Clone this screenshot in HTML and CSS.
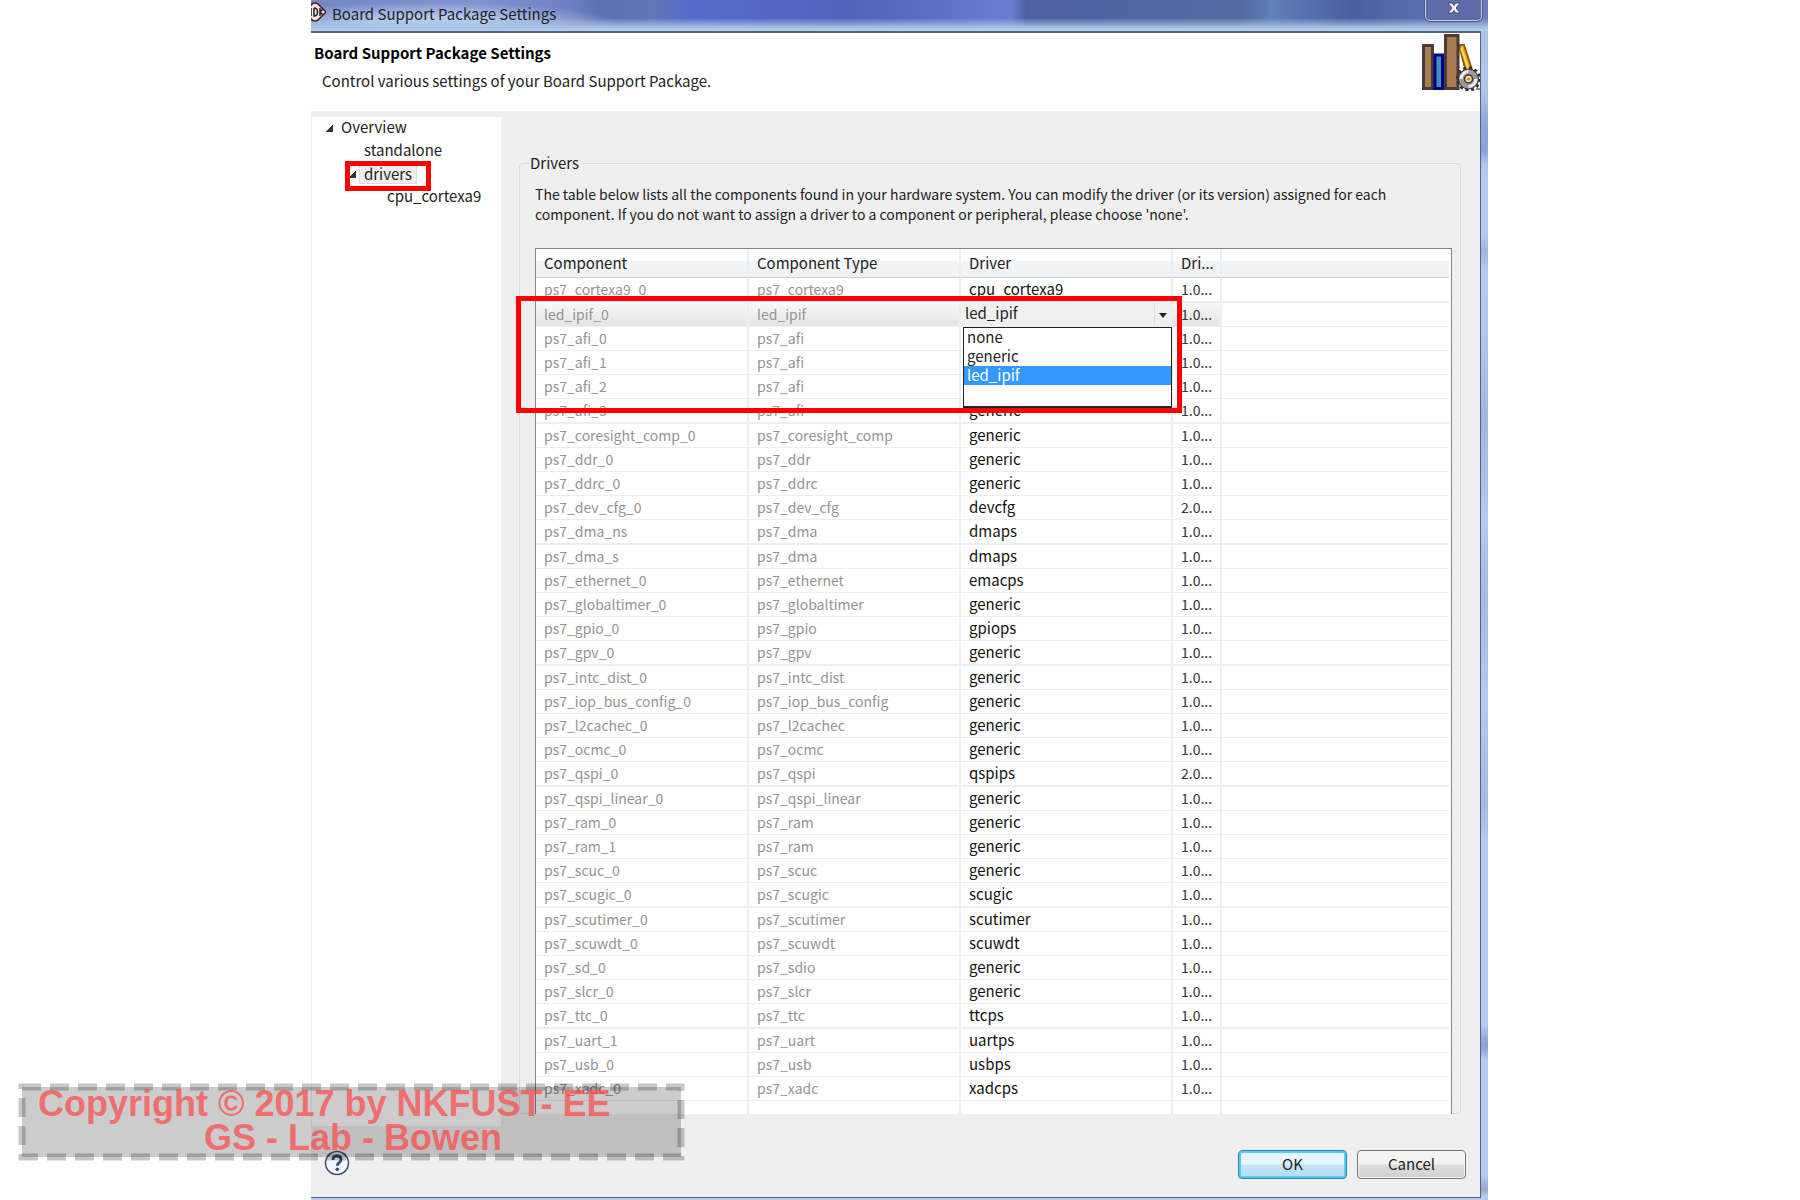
FILE: index.html
```html
<!DOCTYPE html>
<html lang="en">
<head>
<meta charset="utf-8">
<title>Board Support Package Settings</title>
<link rel="stylesheet" href="styles.css">
</head>
<body>
<main class="dialog">
  <header class="titlebar">
    <svg class="app-icon" viewBox="0 0 15 24" width="15" height="24" aria-hidden="true">
      <path d="M-5 11 1 4q3-2 6 0l7 7q1 1 0 2l-7 7q-3 2-6 0l-6-7Z" fill="#f3e4e2" stroke="#4a2228" stroke-width="1.600"/>
      <path d="M0 8v8M3 8v8q3.500 0 3.500-4T3 8M9 8v8M12 9l-3 3 3 3" fill="none" stroke="#222" stroke-width="1.500"/>
    </svg>
    <span class="title">Board Support Package Settings</span>
    <button class="close" type="button" aria-label="Close">
      <svg viewBox="0 0 14 12" width="14" height="12"><path d="M1 1h4l2 2.500 2-2.500h4l-4 5 4 5h-4l-2-2.500-2 2.500H1l4-5z" fill="#fff" stroke="#444d70"/></svg>
    </button>
  </header>
  <div class="frame">
    <section class="banner">
      <div>
        <h1>Board Support Package Settings</h1>
        <p>Control various settings of your Board Support Package.</p>
      </div>
      <svg class="books" viewBox="0 0 60 58" width="60" height="58" aria-hidden="true">
        <path d="M39 12h5l11 34-6 4z" fill="#f2b51c" stroke="#8b5a14" stroke-width="2"/>
        <path d="M41 15l9 26" stroke="#ffe04a" stroke-width="2"/>
        <rect x="3.500" y="12.500" width="9" height="43" fill="#a87b50" stroke="#4c3a34" stroke-width="3"/>
        <rect x="15" y="22" width="7.500" height="33.500" fill="#3f93b8" stroke="#00008c" stroke-width="3"/>
        <rect x="25.500" y="2.500" width="12.500" height="53" fill="#a87b50" stroke="#4c3a34" stroke-width="3"/>
        <path d="M56 56h4" stroke="#b08070" stroke-width="2"/>
        <circle cx="48.500" cy="46" r="11" fill="none" stroke="#333" stroke-width="3" stroke-dasharray="3 2.760"/>
        <circle cx="48.500" cy="46" r="10" fill="#999" stroke="#333"/>
        <path d="M41 46a7.500 7.500 0 0 1 7.500-7.500M56 46a7.500 7.500 0 0 1-7.500 7.500" fill="none" stroke="#eee" stroke-width="3"/>
        <circle cx="48.500" cy="46" r="4" fill="#f3dca0" stroke="#333" stroke-width="1.500"/>
        <circle cx="48.500" cy="46" r="1.500" fill="#c98b20"/>
      </svg>
    </section>
    <div class="body">
      <nav class="tree">
        <ul>
          <li><span class="node"><i class="twisty"></i><a href="#overview">Overview</a></span>
            <ul>
              <li><span class="node"><a href="#standalone">standalone</a></span></li>
              <li><span class="node marked"><i class="twisty"></i><a class="current" href="#drivers">drivers</a></span>
                <ul>
                  <li><span class="node"><a href="#cpu">cpu_cortexa9</a></span></li>
                </ul>
              </li>
            </ul>
          </li>
        </ul>
      </nav>
      <fieldset class="drivers">
        <legend>Drivers</legend>
        <p>The table below lists all the components found in your hardware system. You can modify the driver (or its version) assigned for each component. If you do not want to assign a driver to a component or peripheral, please choose 'none'.</p>
        <div class="grid">
          <table>
            <colgroup><col class="c-name"><col class="c-type"><col class="c-driver"><col class="c-version"><col></colgroup>
            <thead><tr><th>Component</th><th>Component Type</th><th>Driver</th><th>Dri...</th><th></th></tr></thead>
            <tbody>
              <tr><td>ps7_cortexa9_0</td><td>ps7_cortexa9</td><td>cpu_cortexa9</td><td>1.0...</td><td></td></tr>
              <tr class="selected"><td>led_ipif_0</td><td>led_ipif</td><td class="editor">
                <select class="combo" aria-label="Driver for led_ipif_0"><option>none</option><option>generic</option><option selected>led_ipif</option></select>
                <ul class="popup" role="listbox"><li role="option">none</li><li role="option">generic</li><li class="active" role="option" aria-selected="true">led_ipif</li></ul>
              </td><td>1.0...</td><td></td></tr>
              <tr><td>ps7_afi_0</td><td>ps7_afi</td><td></td><td>1.0...</td><td></td></tr>
              <tr><td>ps7_afi_1</td><td>ps7_afi</td><td></td><td>1.0...</td><td></td></tr>
              <tr><td>ps7_afi_2</td><td>ps7_afi</td><td></td><td>1.0...</td><td></td></tr>
              <tr><td>ps7_afi_3</td><td>ps7_afi</td><td>generic</td><td>1.0...</td><td></td></tr>
              <tr><td>ps7_coresight_comp_0</td><td>ps7_coresight_comp</td><td>generic</td><td>1.0...</td><td></td></tr>
              <tr><td>ps7_ddr_0</td><td>ps7_ddr</td><td>generic</td><td>1.0...</td><td></td></tr>
              <tr><td>ps7_ddrc_0</td><td>ps7_ddrc</td><td>generic</td><td>1.0...</td><td></td></tr>
              <tr><td>ps7_dev_cfg_0</td><td>ps7_dev_cfg</td><td>devcfg</td><td>2.0...</td><td></td></tr>
              <tr><td>ps7_dma_ns</td><td>ps7_dma</td><td>dmaps</td><td>1.0...</td><td></td></tr>
              <tr><td>ps7_dma_s</td><td>ps7_dma</td><td>dmaps</td><td>1.0...</td><td></td></tr>
              <tr><td>ps7_ethernet_0</td><td>ps7_ethernet</td><td>emacps</td><td>1.0...</td><td></td></tr>
              <tr><td>ps7_globaltimer_0</td><td>ps7_globaltimer</td><td>generic</td><td>1.0...</td><td></td></tr>
              <tr><td>ps7_gpio_0</td><td>ps7_gpio</td><td>gpiops</td><td>1.0...</td><td></td></tr>
              <tr><td>ps7_gpv_0</td><td>ps7_gpv</td><td>generic</td><td>1.0...</td><td></td></tr>
              <tr><td>ps7_intc_dist_0</td><td>ps7_intc_dist</td><td>generic</td><td>1.0...</td><td></td></tr>
              <tr><td>ps7_iop_bus_config_0</td><td>ps7_iop_bus_config</td><td>generic</td><td>1.0...</td><td></td></tr>
              <tr><td>ps7_l2cachec_0</td><td>ps7_l2cachec</td><td>generic</td><td>1.0...</td><td></td></tr>
              <tr><td>ps7_ocmc_0</td><td>ps7_ocmc</td><td>generic</td><td>1.0...</td><td></td></tr>
              <tr><td>ps7_qspi_0</td><td>ps7_qspi</td><td>qspips</td><td>2.0...</td><td></td></tr>
              <tr><td>ps7_qspi_linear_0</td><td>ps7_qspi_linear</td><td>generic</td><td>1.0...</td><td></td></tr>
              <tr><td>ps7_ram_0</td><td>ps7_ram</td><td>generic</td><td>1.0...</td><td></td></tr>
              <tr><td>ps7_ram_1</td><td>ps7_ram</td><td>generic</td><td>1.0...</td><td></td></tr>
              <tr><td>ps7_scuc_0</td><td>ps7_scuc</td><td>generic</td><td>1.0...</td><td></td></tr>
              <tr><td>ps7_scugic_0</td><td>ps7_scugic</td><td>scugic</td><td>1.0...</td><td></td></tr>
              <tr><td>ps7_scutimer_0</td><td>ps7_scutimer</td><td>scutimer</td><td>1.0...</td><td></td></tr>
              <tr><td>ps7_scuwdt_0</td><td>ps7_scuwdt</td><td>scuwdt</td><td>1.0...</td><td></td></tr>
              <tr><td>ps7_sd_0</td><td>ps7_sdio</td><td>generic</td><td>1.0...</td><td></td></tr>
              <tr><td>ps7_slcr_0</td><td>ps7_slcr</td><td>generic</td><td>1.0...</td><td></td></tr>
              <tr><td>ps7_ttc_0</td><td>ps7_ttc</td><td>ttcps</td><td>1.0...</td><td></td></tr>
              <tr><td>ps7_uart_1</td><td>ps7_uart</td><td>uartps</td><td>1.0...</td><td></td></tr>
              <tr><td>ps7_usb_0</td><td>ps7_usb</td><td>usbps</td><td>1.0...</td><td></td></tr>
              <tr><td>ps7_xadc_0</td><td>ps7_xadc</td><td>xadcps</td><td>1.0...</td><td></td></tr>
              <tr class="filler"><td></td><td></td><td></td><td></td><td></td></tr>
            </tbody>
          </table>
          <div class="highlight"></div>
        </div>
      </fieldset>
    </div>
    <footer class="actions">
      <button class="help" type="button" aria-label="Help">
        <svg viewBox="0 0 26 26" width="26" height="26"><circle cx="13" cy="13" r="11.500" fill="#f5f7fa" stroke="#3f5170" stroke-width="1.500"/><path d="M9 10q0-4 4-4t4 3.500q0 2-2 3.300-1.700 1.200-1.700 3" fill="none" stroke="#35486e" stroke-width="2.800"/><circle cx="13.300" cy="19.300" r="1.800" fill="#35486e"/></svg>
      </button>
      <button class="btn primary" type="button">OK</button>
      <button class="btn" type="button">Cancel</button>
    </footer>
  </div>
</main>
<aside class="notice">
  <svg width="667" height="78" viewBox="0 0 667 78" aria-hidden="true">
    <rect x="4" y="4" width="659" height="70" fill="#000" fill-opacity=".2"/>
    <rect x="4" y="4" width="659" height="70" fill="none" stroke="#000" stroke-opacity=".22" stroke-width="7" stroke-dasharray="19 9"/>
  </svg>
  <div class="lines"><span>Copyright © 2017 by NKFUST- EE</span><span class="second">GS - Lab - Bowen</span></div>
</aside>
</body>
</html>
```
FILE: styles.css
```css
*, *::after { box-sizing: border-box; }
body {
  margin: 0;
  padding: 0 312px 0 311px;
  min-height: 100vh;
  display: flex;
  background: #fff;
  color: #222;
  font: 15px/20px "Noto Sans CJK TC", "Noto Sans", sans-serif;
}
ul { list-style: none; margin: 0; padding: 0; }
p, h1 { margin: 0; }
a { color: inherit; text-decoration: none; }
button { font: inherit; color: inherit; }

.dialog {
  flex: 1;
  min-width: 0;
  display: flex;
  flex-direction: column;
  padding: 0 7px 2px 0;
  background: linear-gradient(180deg, #a9c0e8 0, #b0c8ea 90px, #8fabdc 118px, #86a2d8 150px, #b0caec 165px, #b4caee 235px, #9db4dc 250px, #b4caee 270px, #b0c6ea 350px, #a0b8de 420px, #b4caee 520px, #a4bbe2 600px, #b4caee 700px, #a4bae0 805px, #b4caee 840px, #b4caee 1025px, #86a0d4 1045px, #b4caee 1060px, #b4caee 1175px, #98a8c4 1190px, #b4caee 1196px);
}
.titlebar {
  display: flex;
  align-items: flex-start;
  height: 31px;
  margin-right: -7px;
  padding-right: 6px;
  background:
    linear-gradient(180deg, rgba(170,196,232,0) 18px, #a9c3e6 28px, #b9cfee 31px),
    radial-gradient(190px 22px at 120px 24px, rgba(190,208,238,.9) 30%, rgba(190,208,238,0) 100%),
    linear-gradient(90deg, #7486c4 0, #8292d0 160px, #7080c4 255px, #5e70b4 290px, #6474b8 345px, #566ccc 380px, #5260b8 540px, #6c7cd2 700px, #5060a4 715px, #54689f 930px, #5f80b8 960px, #4c5ea2 1040px, #6b7cb8 100%);
}
.title { flex: 1; padding: 4px 0 0 6px; }
.close {
  width: 57px;
  height: 21px;
  padding: 0 0 4px 1px;
  border: 1px solid #c5cfea;
  border-top: 0;
  border-radius: 0 0 5px 5px;
  background: #5e6da8;
  box-shadow: 0 0 0 1px #47558a;
  line-height: 12px;
}
.frame {
  flex: 1;
  display: flex;
  flex-direction: column;
  border: solid #56637c;
  border-width: 2px 1px 1px 0;
  background: #efefef;
}
.banner {
  display: flex;
  justify-content: space-between;
  height: 78px;
  padding-left: 3px;
  background: #fff;
}
.banner h1 { padding-top: 10px; font-size: 15px; line-height: 20px; color: #000; }
.banner p { padding: 8px 0 0 8px; }

.body { flex: 1; display: flex; padding: 6px 19px 0 1px; }
.tree { width: 189px; margin-bottom: -12px; background: #fff; }
.node { display: flex; align-items: center; height: 23px; padding: 0 0 3px 14px; position: relative; }
.node a { flex: 1; }
.node:not(:has(.twisty)) { padding-left: 29px; }
.tree ul ul { padding-left: 23px; }
.twisty { width: 7px; height: 7px; margin: 3px 8px 0 0; background: linear-gradient(135deg, transparent 45%, #333 50%); }
.marked::after { content: ""; position: absolute; left: 10px; top: -2px; width: 86px; height: 30px; border: 5px solid #f00; }
.node .current { flex: none; margin: 0 0 0 -5px; padding: 0 4px; background: #eee; border: 1px solid #ddd; line-height: 19px; }

.drivers {
  flex: 1;
  min-width: 0;
  margin: 37px 0 0 18px;
  padding: 0 8px 0 15px;
  border: 1px solid #d3dce2;
  border-radius: 4px;
}
.drivers legend { margin-left: -6px; padding: 0 4px 0 1px; line-height: 18px; }
.drivers p { padding: 12px 0 24px; font-size: 14px; line-height: 20px; }
.grid { position: relative; margin-bottom: -2px; padding-right: 2px; border: solid #80868c; border-width: 1px 1px 0; background: #fff; }
table { width: 100%; table-layout: fixed; border-collapse: separate; border-spacing: 0; }
.c-name { width: 213px; }
.c-type, .c-driver { width: 212px; }
.c-version { width: 49px; }
th, td { padding: 0 0 0 8px; text-align: left; font-weight: 400; line-height: 20px; white-space: nowrap; border: solid #e9eff3; border-width: 0 2px 1px 0; }
th:last-child, td:last-child { border-right: 0; }
th { height: 29px; border-bottom-color: #ccd0d4; background: linear-gradient(#fff 40%, #f3f4f6 45%, #f0f1f3); }
td { height: 24px; padding-bottom: 2px; color: #949494; font-size: 14px; }
tr:nth-child(5n+1) td { height: 25px; border-bottom-width: 2px; }
td:nth-child(3) { color: #111; font-size: 15px; }
td:nth-child(4) { color: #333; }
.selected td:not(:last-child) { background: linear-gradient(#f8f8f8, #e4e4e4); }
.filler td { height: 13px; padding: 0; border-bottom: 0; }
td.editor { position: relative; padding: 0; }
.combo {
  display: block;
  appearance: none;
  width: 100%;
  height: 23px;
  padding: 0 0 4px 4px;
  border: 0;
  border-radius: 0;
  color: #222;
  font: inherit;
  background: linear-gradient(#ddd, #ddd) 193px 0 / 1px 100% no-repeat, #f0f0f0;
}
.editor::after { content: ""; position: absolute; right: 4px; top: 10px; border: 4px solid transparent; border-top: 5px solid #222; border-bottom: 0; }
.popup { position: absolute; z-index: 1; top: 24px; left: 2px; right: -1px; height: 81px; border: 1px solid #222; border-bottom-width: 2px; background: #fff; color: #222; }
.popup li { height: 19px; padding-left: 3px; line-height: 18px; }
.popup .active { background: #3399ff; color: #fff; }
.highlight { position: absolute; z-index: 2; left: -20px; top: 47px; width: 666px; height: 117px; border: 5px solid #f00; }

.actions { display: flex; align-items: flex-start; gap: 10px; height: 83px; padding: 36px 14px 0 13px; }
.help { width: 26px; height: 26px; margin-right: auto; padding: 0; border: 0; background: none; line-height: 0; }
.btn { width: 109px; height: 29px; padding: 0 0 2px; border: 1px solid #777; border-radius: 4px; background: linear-gradient(#f3f3f3 48%, #dedede 52%, #d0d0d0); box-shadow: inset 0 0 0 1px #f5f5f5; }
.primary { border-color: #3a7fa8; background: linear-gradient(#e8f5fc 48%, #c5e5f8 52%, #afdcf5); box-shadow: inset 0 0 0 2px #4fd0f5; }

.notice { position: absolute; z-index: 3; left: 18px; top: 1083px; }
.notice svg { display: block; }
.lines { position: absolute; left: 20px; top: 4px; display: flex; flex-direction: column; font: bold 36px/34px "Liberation Sans", Arial, sans-serif; color: rgba(255, 70, 70, .7); white-space: nowrap; }
.second { padding-left: 166px; }
```
